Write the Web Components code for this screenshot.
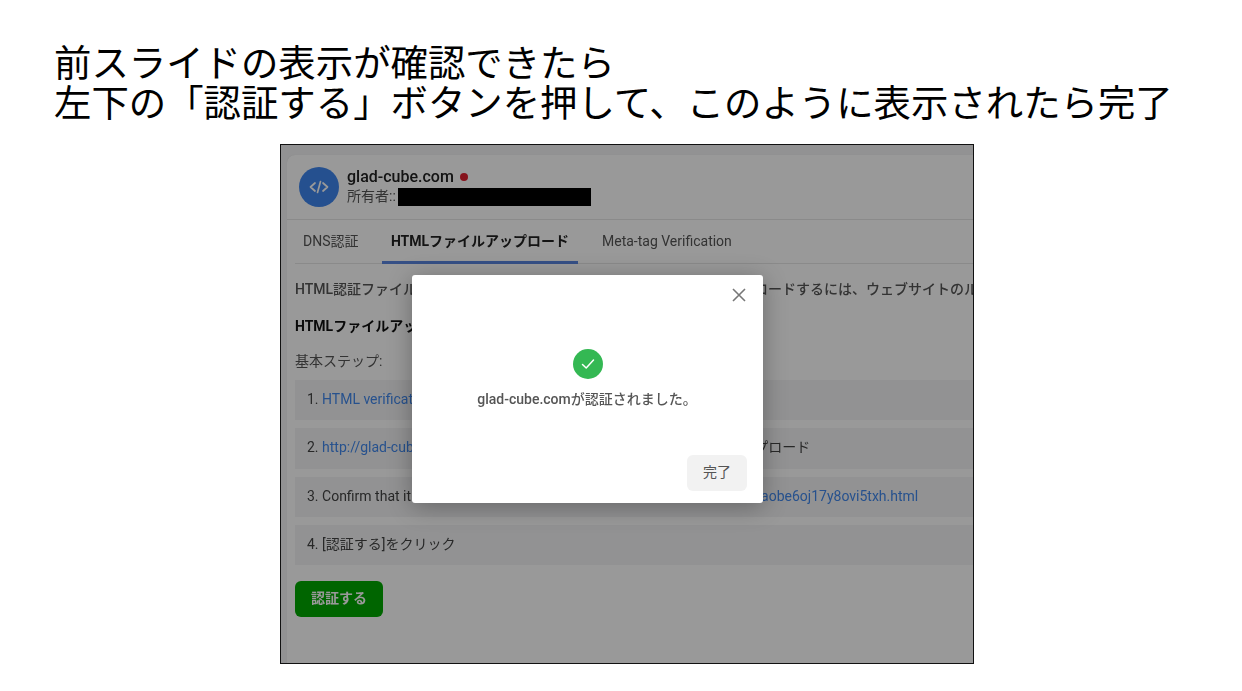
<!DOCTYPE html>
<html lang="ja"><head><meta charset="utf-8">
<style>
html,body{margin:0;background:#fff;height:100%;overflow:hidden}
body{font-family:Roboto,"Noto Sans CJK JP",sans-serif}
</style></head>
<body>
<slide-root>
  <slide-title slot="title"><span>前スライドの表示が確認できたら</span><span>左下の「認証する」ボタンを押して、このように表示されたら完了</span></slide-title>
  <shot-frame>
    <domain-header name="glad-cube.com" owner="所有者::"></domain-header>
    <tab-bar></tab-bar>
    <verify-body>
      <step-row>1. <step-link>HTML verification file</step-link></step-row>
      <step-row>2. <step-link>http://glad-cube.com/</step-link><hidden-gap w="268"></hidden-gap>アップロード</step-row>
      <step-row>3. Confirm that it<hidden-gap w="350"></hidden-gap><step-link>aobe6oj17y8ovi5txh.html</step-link></step-row>
      <step-row>4. [認証する]をクリック</step-row>
    </verify-body>
    <success-modal slot="modal">glad-cube.comが認証されました。</success-modal>
  </shot-frame>
</slide-root>
<script>
function def(name, css, html){
  customElements.define(name, class extends HTMLElement{
    constructor(){super();const s=this.attachShadow({mode:'open'});
      s.innerHTML='<style>'+css+'</style>'+(typeof html==='function'?html(this):html);}
  });
}
def('slide-root',`:host{display:flex;flex-direction:column;width:1242px;height:691px;box-sizing:border-box;padding:41px 0 0 54px}`,
 `<slot name="title"></slot><slot></slot>`);
def('slide-title',`:host{display:block;font:400 37.4px/40px "Noto Sans CJK JP",sans-serif;color:#000;white-space:nowrap;height:103px}
 ::slotted(span){display:block}`,`<slot></slot>`);
def('shot-frame',`
 :host{display:block;position:relative;width:694px;height:520px;margin-left:226px;box-sizing:border-box;border:1px solid #111;overflow:hidden;background:#f3f4f5}
 .wrap{position:absolute;inset:0;filter:blur(.35px)}
 .card{margin:10px 0 0 6px;height:520px;background:#fff;border-radius:8px 0 0 0;box-shadow:0 0 1px rgba(0,0,0,.15)}
 .veil{position:absolute;inset:0;background:rgba(0,0,0,.4)}
 .m{position:absolute;left:131px;top:130px}
`,`<div class="wrap"><div class="card"><slot></slot></div><div class="veil"></div><div class="m"><slot name="modal"></slot></div></div>`);
def('domain-header',`
 :host{display:block;height:65px;box-sizing:border-box;padding:12px 0 0 12px;border-bottom:1px solid #e6e6e6}
 .row{display:flex;gap:8px}
 .ava{width:40px;height:40px;border-radius:50%;background:#3f86ee;display:flex;align-items:center;justify-content:center;flex:none}
 .name{font:500 16px/20px Roboto,"Noto Sans CJK JP",sans-serif;color:#222;display:flex;align-items:center;gap:6px}
 .dot{width:8px;height:8px;border-radius:50%;background:#e02030}
 .own{font:400 14px/20px Roboto,"Noto Sans CJK JP",sans-serif;color:#555;display:flex;align-items:center;margin-top:-1px}
 .mask{display:inline-block;width:193px;height:18px;background:#000;margin:2px 0 0 2px}
`,h=>`<div class="row"><div class="ava"><svg width="22" height="22" viewBox="0 0 22 22" fill="none" stroke="#fff" stroke-width="1.7" stroke-linecap="round" stroke-linejoin="round"><path d="M7 7l-4.5 4L7 15M15 7l4.5 4L15 15M12.5 5.5l-3 11"/></svg></div>
 <div><div class="name"><span>${h.getAttribute('name')}</span><span class="dot"></span></div><div class="own"><span>${h.getAttribute('owner')}</span><span class="mask"></span></div></div></div>`);
def('tab-bar',`
 :host{display:flex;height:44px;box-sizing:border-box;margin-left:8px;border-bottom:1px solid #e6e6e6;font:400 14px/42px Roboto,"Noto Sans CJK JP",sans-serif;color:#555}
 div{box-sizing:border-box;height:44px;white-space:nowrap}
 .a{padding:0 8px;width:87px}
 .b{width:196px;text-align:center;font-weight:700;color:#222;border-bottom:3px solid #5b86e0}
 .c{padding-left:24px}
`,`<div class="a">DNS認証</div><div class="b">HTMLファイルアップロード</div><div class="c">Meta-tag Verification</div>`);
def('verify-body',`
 :host{display:block;padding:0 0 0 8px;font:400 14px/20px Roboto,"Noto Sans CJK JP",sans-serif;color:#555;white-space:nowrap}
 p{margin:0}
 .p1{margin-top:15px;font-weight:500}
 .p2{margin-top:17px;color:#111;font-weight:700}
 .p3{margin-top:15px}
 .list{display:flex;flex-direction:column;gap:8px;margin-top:9px}
 button{display:block;margin-top:16px;width:88px;height:36px;border:0;border-radius:6px;background:#00a800;color:#fff;font:700 14px/32px Roboto,"Noto Sans CJK JP",sans-serif;padding:0 0 2px}
 i{display:inline-block;width:337px}
`,`<p class="p1">HTML認証ファイル<i></i>ロードするには、ウェブサイトのルート</p>
 <p class="p2">HTMLファイルアップロード</p><p class="p3">基本ステップ:</p>
 <div class="list"><slot></slot></div><button>認証する</button>`);
def('step-row',`
 :host{display:block;box-sizing:border-box;height:40.25px;background:#f3f4f6;padding:9px 0 0 12px;font:400 14px/20px Roboto,"Noto Sans CJK JP",sans-serif;color:#444;white-space:nowrap}
`,`<slot></slot>`);
def('step-link',`:host{display:inline;color:#4288ec}`,`<slot></slot>`);
def('hidden-gap',`:host{display:inline-block}`,'');
document.querySelectorAll('hidden-gap').forEach(g=>g.style.width=g.getAttribute('w')+'px');
def('success-modal',`
 :host{display:flex;flex-direction:column;align-items:center;position:relative;width:351px;height:228px;background:#fff;border-radius:3px;box-shadow:0 4px 24px rgba(0,0,0,.3);box-sizing:border-box;padding-top:74px}
 .x{position:absolute;right:17px;top:13px;width:14px;height:14px}
 .ck{width:30px;height:30px;border-radius:50%;background:#34b853;display:flex;align-items:center;justify-content:center}
 .msg{margin-top:10px;margin-left:-1px;font:500 14px/20px Roboto,"Noto Sans CJK JP",sans-serif;color:#555;white-space:nowrap}
 .foot{position:absolute;right:16px;bottom:12px}
 button{width:60px;height:36px;border:0;border-radius:6px;background:#f2f2f2;color:#555;font:400 14px/32px Roboto,"Noto Sans CJK JP",sans-serif;padding:0 0 2px}
`,`<svg class="x" viewBox="0 0 14 14" fill="none" stroke="#777" stroke-width="1.6"><path d="M1 1l12 12M13 1L1 13"/></svg>
 <div class="ck"><svg width="16" height="16" viewBox="0 0 16 16" fill="none" stroke="#fff" stroke-width="1.5" stroke-linecap="round" stroke-linejoin="round"><path d="M2.5 8.5l3.7 3.5 7.3-8"/></svg></div>
 <div class="msg"><slot></slot></div><div class="foot"><button>完了</button></div>`);
</script>
</body></html>
